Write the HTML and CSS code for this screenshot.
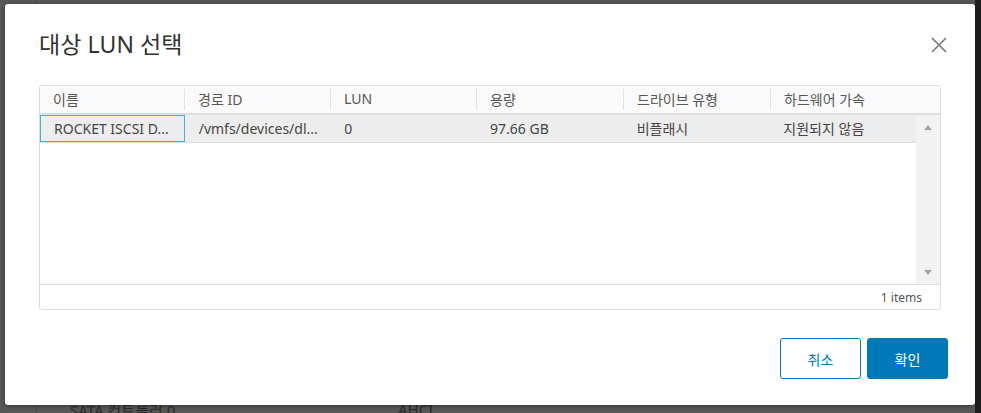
FILE: index.html
```html
<!DOCTYPE html>
<html lang="ko">
<head>
<meta charset="utf-8">
<title>대상 LUN 선택</title>
<link rel="stylesheet" href="styles.css">
</head>
<body>
<div class="backdrop">
  <div class="bg-line"></div>
  <div class="bg-row"><span class="bg-name">SATA 컨트롤러 0</span><span class="bg-val">AHCI</span></div>
  <div class="bg-right"></div>
</div>
<div class="modal">
  <div class="modal-head">
    <h1 class="modal-title">대상 LUN 선택</h1>
    <button class="close" aria-label="닫기">
      <svg width="16" height="16" viewBox="0 0 16 16"><path d="M1 1 L15 15 M15 1 L1 15" stroke="#757575" stroke-width="1.6" fill="none"/></svg>
    </button>
  </div>
  <div class="grid">
    <div class="grid-head">
      <div class="hcell c1">이름</div>
      <div class="hcell c2">경로 ID</div>
      <div class="hcell c3">LUN</div>
      <div class="hcell c4">용량</div>
      <div class="hcell c5">드라이브 유형</div>
      <div class="hcell c6 last">하드웨어 가속</div>
    </div>
    <div class="grid-body">
      <div class="rows">
        <div class="row selected">
          <div class="cell c1 focus">ROCKET ISCSI D...</div>
          <div class="cell c2">/vmfs/devices/dl...</div>
          <div class="cell c3">0</div>
          <div class="cell c4">97.66 GB</div>
          <div class="cell c5">비플래시</div>
          <div class="cell c6">지원되지 않음</div>
        </div>
      </div>
      <div class="scrollbar">
        <span class="arrow up"></span>
        <span class="arrow down"></span>
      </div>
    </div>
    <div class="grid-foot">1 items</div>
  </div>
  <div class="modal-foot">
    <button class="btn btn-outline">취소</button>
    <button class="btn btn-primary">확인</button>
  </div>
</div>
</body>
</html>
```
FILE: styles.css
```css
html, body {
  margin: 0;
  padding: 0;
  width: 981px;
  height: 413px;
  overflow: hidden;
}
body {
  background: #575757;
  font-family: "Noto Sans", "Noto Sans CJK KR", sans-serif;
  position: relative;
}
.backdrop {
  position: absolute;
  inset: 0;
  background: #575757;
}
.bg-line {
  position: absolute;
  left: 36px;
  top: 0;
  bottom: 0;
  width: 1px;
  background: #4a4a4a;
}
.bg-row {
  position: absolute;
  left: 70px;
  top: 399px;
  font-size: 15px;
  color: #2a2a2a;
  display: flex;
}
.bg-name { width: 328px; }
.bg-right {
  position: absolute;
  right: 0;
  top: 0;
  bottom: 0;
  width: 6px;
  background: #1e1e1e;
}
.modal {
  position: absolute;
  left: 5px;
  top: 4px;
  width: 970px;
  height: 401px;
  background: #fff;
  border-radius: 3px;
  box-shadow: 0 1px 4px rgba(0,0,0,0.4);
  box-sizing: border-box;
  padding: 0 27px 0 34px;
  display: flex;
  flex-direction: column;
}
.modal-head {
  display: flex;
  align-items: center;
  justify-content: space-between;
  height: 81px;
}
.modal-title {
  margin: 0;
  font-weight: 400;
  font-size: 23px;
  color: #313131;
  margin-bottom: 4px;
  letter-spacing: 0.1px;
}
.close {
  border: 0;
  background: none;
  padding: 0;
  width: 16px;
  height: 16px;
  margin-top: 1px;
  margin-right: 1px;
}
.close svg { display: block; }
.grid {
  width: 902px;
  height: 225px;
  box-sizing: border-box;
  border: 1px solid #ddd;
  border-radius: 3px;
  display: flex;
  flex-direction: column;
  font-size: 14px;
  color: #454545;
}
.grid-head {
  display: flex;
  height: 29px;
  background: #fafafa;
  border-bottom: 2px solid #dedede;
  box-sizing: border-box;
}
.hcell {
  display: flex;
  align-items: center;
  padding-left: 13px;
  padding-bottom: 2px;
  box-sizing: border-box;
  color: #565656;
  position: relative;
  white-space: nowrap;
}
.hcell::after {
  content: "";
  position: absolute;
  right: 0;
  top: 3px;
  bottom: 3px;
  width: 1px;
  background: #e2e2e2;
}
.hcell.last::after { display: none; }
.c1 { width: 145px; }
.c2 { width: 146px; }
.c3 { width: 146px; }
.c4 { width: 147px; }
.c5 { width: 147px; }
.c6 { width: 147px; }
.hcell.c6 { flex: 1; }
.grid-body {
  display: flex;
  height: 169px;
  border-bottom: 1px solid #ddd;
}
.rows {
  width: 876px;
}
.row {
  display: flex;
  height: 28px;
  border-bottom: 1px solid #dedede;
  box-sizing: border-box;
}
.row.selected { background: #ededed; }
.cell {
  display: flex;
  align-items: center;
  padding-left: 14px;
  padding-bottom: 1px;
  box-sizing: border-box;
  white-space: nowrap;
  color: #454545;
}
.cell.focus {
  border: 1px solid #49afd9;
  padding-left: 13px;
}
.scrollbar {
  flex: 1;
  background: #f2f2f2;
  position: relative;
}
.arrow {
  position: absolute;
  left: 8px;
  width: 0;
  height: 0;
  border-left: 4px solid transparent;
  border-right: 4px solid transparent;
}
.arrow.up {
  top: 10px;
  border-bottom: 5px solid #a3a3a3;
}
.arrow.down {
  bottom: 9px;
  border-top: 5px solid #a3a3a3;
}
.grid-foot {
  flex: 1;
  display: flex;
  align-items: center;
  justify-content: flex-end;
  padding-right: 18px;
  font-size: 12px;
  color: #565656;
}
.modal-foot {
  display: flex;
  justify-content: flex-end;
  gap: 6px;
  margin-top: 28px;
}
.btn {
  width: 81px;
  height: 41px;
  border-radius: 3px;
  font-family: "Noto Sans CJK KR", "Noto Sans", sans-serif;
  font-size: 14px;
  box-sizing: border-box;
  padding: 0;
}
.btn-outline {
  background: #fff;
  border: 1px solid #0079b8;
  color: #0079b8;
}
.btn-primary {
  background: #0079b8;
  border: 1px solid #0079b8;
  color: #fff;
}
```
